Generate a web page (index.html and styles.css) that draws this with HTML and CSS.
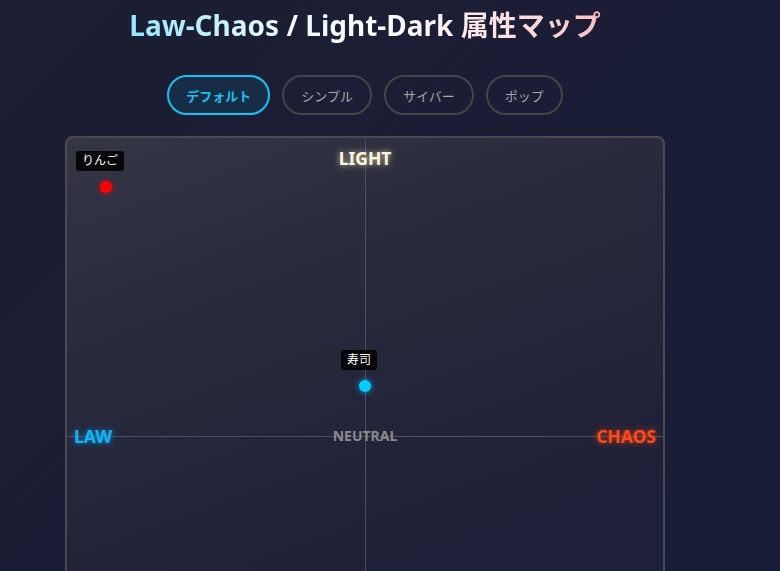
FILE: index.html
```html
<!DOCTYPE html>
<html lang="ja">
<head>
    <meta charset="UTF-8">
    <meta name="viewport" content="width=device-width, initial-scale=1.0">
    <title>属性マップ</title>
    <link rel="stylesheet" href="styles.css">
</head>
<body>
    <div class="page">
        <h1 class="title">Law-Chaos / Light-Dark 属性マップ</h1>

        <!-- Theme switcher -->
        <div class="themes">
            <button class="theme-btn active">デフォルト</button>
            <button class="theme-btn">シンプル</button>
            <button class="theme-btn">サイバー</button>
            <button class="theme-btn">ポップ</button>
        </div>

        <!-- Alignment map -->
        <div class="map">
            <div class="axis axis-v"></div>
            <div class="axis axis-h"></div>

            <span class="axis-label label-light">LIGHT</span>
            <span class="axis-label label-law">LAW</span>
            <span class="axis-label label-neutral">NEUTRAL</span>
            <span class="axis-label label-chaos">CHAOS</span>

            <div class="point" style="left: 5.55%; top: 7.2%;">
                <span class="point-name">りんご</span>
                <span class="dot dot-red"></span>
            </div>
            <div class="point" style="left: 49%; top: 40.6%;">
                <span class="point-name">寿司</span>
                <span class="dot dot-cyan"></span>
            </div>
        </div>
    </div>
</body>
</html>
```

FILE: styles.css
```css
body {
    margin: 0;
    padding: 0;
    min-height: 100vh;
    font-family: "Noto Sans", "Noto Sans CJK JP", sans-serif;
    background: linear-gradient(135deg, #1c1f32 0%, #1a1d36 50%, #181c38 100%);
    color: #ddd;
}

.page {
    width: 600px;
    margin-left: 65px;
    padding-top: 6px;
}

.title {
    margin: 0;
    font-size: 28px;
    line-height: 38px;
    font-weight: bold;
    text-align: center;
    background: linear-gradient(90deg, #6fdcff 0%, #e8fbff 35%, #ffffff 55%, #ffd6d6 80%, #ffa5a5 100%);
    -webkit-background-clip: text;
    background-clip: text;
    color: transparent;
}

.themes {
    display: flex;
    justify-content: center;
    gap: 12px;
    margin-top: 31px;
}

.theme-btn {
    height: 40px;
    padding: 0 17px;
    border: 2px solid #454545;
    border-radius: 20px;
    background: transparent;
    color: #a8a8a8;
    font-family: inherit;
    font-size: 13px;
    cursor: pointer;
}

.theme-btn.active {
    border-color: #12c4f5;
    background: #172d45;
    color: #14c2f2;
    font-weight: bold;
}

/* square map with two crossing axes */
.map {
    position: relative;
    width: 600px;
    height: 600px;
    margin-top: 21px;
    box-sizing: border-box;
    border: 2px solid #4a4a50;
    border-radius: 8px;
    background: linear-gradient(160deg, #343644 0%, #26283b 35%, #1e1f38 70%, #1d1e39 100%);
}

.axis {
    position: absolute;
    background: #4b4e62;
}

.axis-v {
    left: 50%;
    top: 0;
    bottom: 0;
    width: 1px;
}

.axis-h {
    top: 50%;
    left: 0;
    right: 0;
    height: 1px;
}

.axis-label {
    position: absolute;
    font-weight: bold;
    font-size: 17.5px;
    line-height: 20px;
}

.label-light {
    top: 10px;
    left: 50%;
    transform: translateX(-50%);
    color: #fff8df;
    text-shadow: 0 0 6px rgba(255, 240, 180, 0.8);
}

.label-law {
    top: 288px;
    left: 7px;
    color: #15b4f5;
    text-shadow: 0 0 6px rgba(0, 170, 255, 0.8);
}

.label-chaos {
    top: 288px;
    right: 7px;
    color: #ff4a1a;
    text-shadow: 0 0 6px rgba(255, 70, 0, 0.8);
}

.label-neutral {
    top: 288px;
    left: 50%;
    transform: translateX(-50%);
    font-size: 14px;
    color: #8a8a8e;
}

.point {
    position: absolute;
    width: 0;
    height: 0;
}

.point-name {
    position: absolute;
    bottom: 10px;
    left: 0;
    transform: translateX(-50%);
    padding: 1px 6px;
    border-radius: 3px;
    background: rgba(0, 0, 0, 0.85);
    color: #fff;
    font-size: 12px;
    line-height: 18px;
    white-space: nowrap;
}

.dot {
    position: absolute;
    left: 0;
    top: 0;
    width: 12px;
    height: 12px;
    border-radius: 50%;
}

.dot-red {
    background: #ff0000;
    box-shadow: 0 0 6px rgba(255, 0, 0, 0.8);
}

.dot-cyan {
    background: #00ccff;
    box-shadow: 0 0 6px rgba(0, 200, 255, 0.8);
}
```
